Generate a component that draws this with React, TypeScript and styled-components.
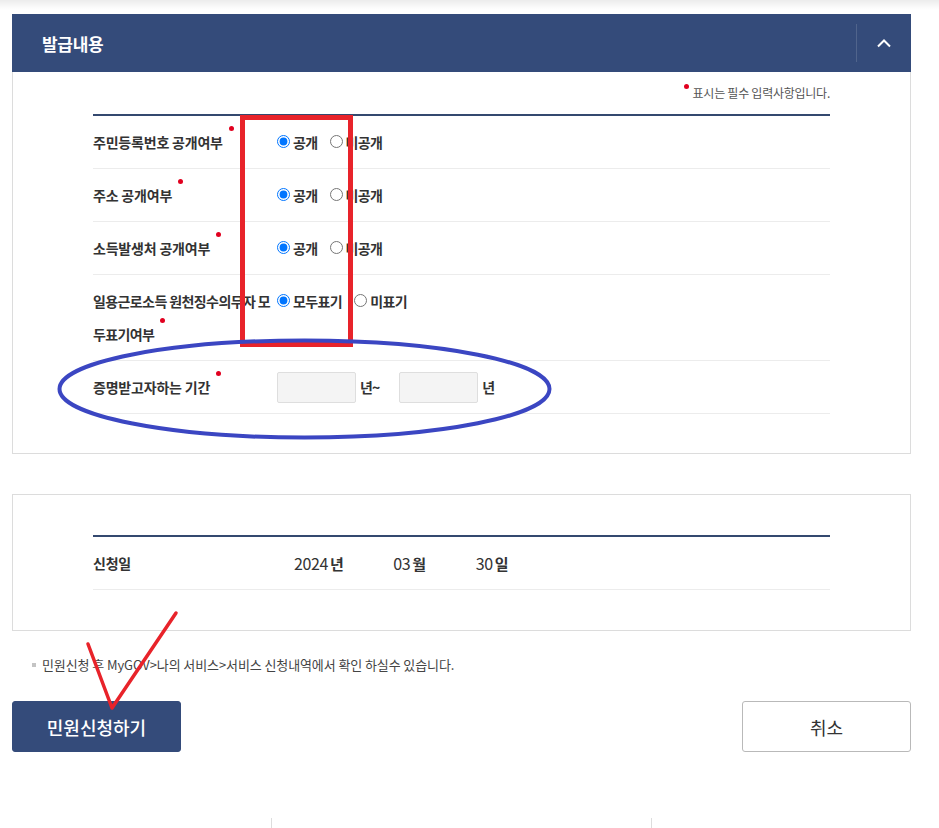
import React from 'react';
import styled, { createGlobalStyle } from 'styled-components';

const navy = '#344b7a';
const lineNavy = '#34496f';

const GlobalStyle = createGlobalStyle`
  html, body {
    margin: 0;
    padding: 0;
    background: #fff;
  }
  body {
    font-family: "Noto Sans CJK KR", "Noto Sans", sans-serif;
    color: #333;
  }
  * { box-sizing: border-box; }
`;

const Page = styled.div`
  position: relative;
  width: 939px;
  height: 828px;
  overflow: hidden;
`;

const TopShade = styled.div`
  height: 10px;
  background: linear-gradient(to bottom, #ececec, #fafafa 70%, #fff);
`;

const Content = styled.div`
  width: 899px;
  margin: 4px 0 0 12px;
`;

const SectionHeader = styled.div`
  height: 58px;
  background: ${navy};
  display: flex;
  align-items: center;
  justify-content: space-between;
`;

const SectionTitle = styled.h2`
  margin: 0;
  padding-left: 30px;
  font-size: 17px;
  font-weight: 700;
  letter-spacing: -0.3px;
  color: #fff;
`;

const ToggleButton = styled.button`
  width: 55px;
  height: 38px;
  padding: 0;
  border: 0;
  border-left: 1px solid rgba(255, 255, 255, 0.14);
  background: transparent;
  display: flex;
  align-items: center;
  justify-content: center;
  cursor: pointer;
`;

const SectionBody = styled.div`
  border: 1px solid #dcdcdc;
  border-top: 0;
  padding: 12px 80px 39px;
`;

const RequiredNote = styled.p`
  margin: 0 0 12px;
  text-align: right;
  font-size: 12px;
  line-height: 18px;
  letter-spacing: -0.25px;
  color: #555;
`;

const Dot = styled.span<{ $gap?: number }>`
  display: inline-block;
  width: 5px;
  height: 5px;
  border-radius: 50%;
  background: #e1001f;
  vertical-align: top;
  margin-left: ${(p) => p.$gap ?? 6}px;
  margin-right: ${(p) => (p.$gap === 0 ? 4 : 0)}px;
`;

const FormTable = styled.div`
  border-top: 2px solid ${lineNavy};
`;

const Row = styled.div`
  display: flex;
  align-items: flex-start;
  padding: 10px 0 9px;
  border-bottom: 1px solid #ececec;
  line-height: 33px;
`;

const Label = styled.div<{ $width?: number; $tight?: boolean }>`
  width: ${(p) => p.$width ?? 184}px;
  flex-shrink: 0;
  font-size: 14px;
  font-weight: 700;
  color: #333;
  letter-spacing: ${(p) => (p.$tight ? '-0.6px' : '-0.2px')};
`;

const Field = styled.div`
  display: flex;
  align-items: center;
  min-height: 33px;
`;

const RadioOption = styled.label`
  display: flex;
  align-items: center;
  height: 33px;
  margin-right: 12px;
  font-size: 14px;
  font-weight: 700;
  letter-spacing: -0.6px;
  color: #333;
  cursor: pointer;

  input {
    width: 13px;
    height: 13px;
    margin: 0 3px 2px 0;
  }
`;

const YearInput = styled.input`
  width: 79px;
  height: 31px;
  border: 1px solid #dedede;
  border-radius: 2px;
  background: #f4f4f4;
  font: inherit;
`;

const Unit = styled.span<{ $after?: number }>`
  margin: 0 ${(p) => p.$after ?? 0}px 0 4px;
  font-size: 14px;
  font-weight: 700;
  letter-spacing: -1px;
`;

const Panel = styled.div`
  margin-top: 40px;
  border: 1px solid #dcdcdc;
  padding: 40px 80px;
`;

const DateGroup = styled.div`
  display: flex;
  gap: 50px;
  font-size: 16px;
  color: #333;
`;

const DatePart = styled.span`
  letter-spacing: -0.4px;

  b {
    margin-left: 2px;
    font-weight: 700;
    font-size: 15px;
  }
`;

const Notice = styled.p`
  display: flex;
  align-items: center;
  margin: 25px 0 0;
  font-size: 13px;
  line-height: 18px;
  letter-spacing: -0.1px;
  color: #444;
`;

const Bullet = styled.span`
  width: 4px;
  height: 4px;
  margin: 0 6px 0 20px;
  background: #c4c4c4;
`;

const ButtonRow = styled.div`
  display: flex;
  justify-content: space-between;
  margin-top: 27px;
`;

const Button = styled.button<{ $primary?: boolean }>`
  width: 169px;
  height: 51px;
  border-radius: 3px;
  border: 1px solid ${(p) => (p.$primary ? navy : '#b9b9b9')};
  background: ${(p) => (p.$primary ? navy : '#fff')};
  color: ${(p) => (p.$primary ? '#fff' : '#333')};
  font-family: inherit;
  font-size: 18px;
  font-weight: ${(p) => (p.$primary ? 500 : 400)};
  letter-spacing: 0;
  cursor: pointer;
`;

const Footer = styled.div`
  display: grid;
  grid-template-columns: 271px 380px 1fr;
  margin-top: 66px;
  height: 20px;
`;

const FooterCell = styled.div<{ $divider?: boolean }>`
  border-left: ${(p) => (p.$divider ? '1px solid #dddddd' : '0')};
`;

const Annotations = styled.svg`
  position: absolute;
  top: 0;
  left: 0;
  pointer-events: none;
`;

type Choice = { label: string; checked?: boolean };

const radioRows: { name: string; label: string; tight?: boolean; choices: Choice[] }[] = [
  { name: 'rrn', label: '주민등록번호 공개여부', choices: [{ label: '공개', checked: true }, { label: '미공개' }] },
  { name: 'addr', label: '주소 공개여부', choices: [{ label: '공개', checked: true }, { label: '미공개' }] },
  { name: 'src', label: '소득발생처 공개여부', choices: [{ label: '공개', checked: true }, { label: '미공개' }] },
  {
    name: 'daily',
    label: '일용근로소득 원천징수의무자 모두표기여부',
    tight: true,
    choices: [{ label: '모두표기', checked: true }, { label: '미표기' }],
  },
];

export default function App() {
  return (
    <Page>
      <GlobalStyle />
      <TopShade />
      <Content>
        <section>
          <SectionHeader>
            <SectionTitle>발급내용</SectionTitle>
            <ToggleButton aria-label="접기">
              <svg width="16" height="10" viewBox="0 0 16 10">
                <path d="M2 8.5 L8 2.5 L14 8.5" fill="none" stroke="#fff" strokeWidth="2" />
              </svg>
            </ToggleButton>
          </SectionHeader>
          <SectionBody>
            <RequiredNote>
              <Dot $gap={0} />
              표시는 필수 입력사항입니다.
            </RequiredNote>
            <FormTable>
              {radioRows.map((row) => (
                <Row key={row.name}>
                  <Label $tight={row.tight}>
                    {row.label}
                    <Dot />
                  </Label>
                  <Field>
                    {row.choices.map((c) => (
                      <RadioOption key={c.label}>
                        <input type="radio" name={row.name} defaultChecked={c.checked} />
                        {c.label}
                      </RadioOption>
                    ))}
                  </Field>
                </Row>
              ))}
              <Row>
                <Label>
                  증명받고자하는 기간
                  <Dot />
                </Label>
                <Field>
                  <YearInput type="text" />
                  <Unit $after={20}>년~</Unit>
                  <YearInput type="text" />
                  <Unit>년</Unit>
                </Field>
              </Row>
            </FormTable>
          </SectionBody>
        </section>

        <Panel>
          <FormTable>
            <Row>
              <Label $width={201}>신청일</Label>
              <DateGroup>
                <DatePart>
                  2024<b>년</b>
                </DatePart>
                <DatePart>
                  03<b>월</b>
                </DatePart>
                <DatePart>
                  30<b>일</b>
                </DatePart>
              </DateGroup>
            </Row>
          </FormTable>
        </Panel>

        <Notice>
          <Bullet />
          민원신청 후 MyGOV&gt;나의 서비스&gt;서비스 신청내역에서 확인 하실수 있습니다.
        </Notice>

        <ButtonRow>
          <Button $primary>민원신청하기</Button>
          <Button>취소</Button>
        </ButtonRow>
      </Content>

      <Footer>
        <FooterCell />
        <FooterCell $divider />
        <FooterCell $divider />
      </Footer>

      <Annotations width="939" height="828" viewBox="0 0 939 828">
        <rect x="242.5" y="117.5" width="108" height="227" fill="none" stroke="#e8232a" strokeWidth="5" />
        <ellipse cx="304.5" cy="389" rx="245" ry="48.5" fill="none" stroke="#3b46c2" strokeWidth="4" />
        <path
          d="M88 644 L112 708 L176 613"
          fill="none"
          stroke="#e8232a"
          strokeWidth="3.5"
          strokeLinecap="round"
          strokeLinejoin="round"
        />
      </Annotations>
    </Page>
  );
}
